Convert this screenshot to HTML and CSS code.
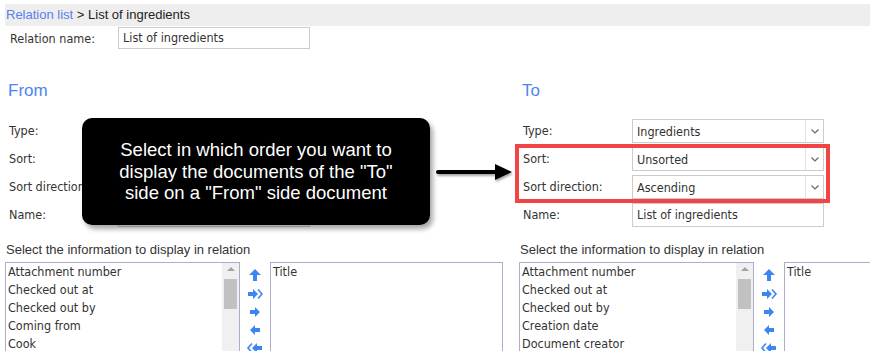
FILE: index.html
```html
<!DOCTYPE html>
<html lang="en">
<head>
  <meta charset="UTF-8" />
  <title>Relation | List of ingredients</title>
  <link rel="stylesheet" href="styles.css">
</head>
<body>
  <!-- Breadcrumb -->
  <div class="crumb"><a href="#">Relation list</a> &gt; List of ingredients</div>

  <div class="name-row">
    <label>Relation name:</label>
    <div class="field">List of ingredients</div>
  </div>

  <div class="sides">
    <!-- From side (its fields sit under the callout) -->
    <section class="side">
      <h2>From</h2>
      <div class="rows">
        <div class="row"><label>Type:</label><div class="select"><span></span><i></i></div></div>
        <div class="row"><label>Sort:</label><div class="select"><span></span><i></i></div></div>
        <div class="row"><label>Sort direction:</label><div class="select"><span></span><i></i></div></div>
        <div class="row"><label>Name:</label><div class="field wide"></div></div>
      </div>
      <div class="pick">
        <p>Select the information to display in relation</p>
        <div class="lists">
          <div class="list avail">
            <ul>
              <li>Attachment number</li>
              <li>Checked out at</li>
              <li>Checked out by</li>
              <li>Coming from</li>
              <li>Cook</li>
            </ul>
            <div class="scroll"><b></b><em></em></div>
          </div>
          <div class="moves">
            <svg viewBox="0 0 18 18"><path d="M9 2 L15 8 L11 8 L11 14 L7 14 L7 8 L3 8 Z" /></svg>
            <svg viewBox="0 0 18 18"><path d="M2 7 L7 7 L7 4 L12 9 L7 14 L7 11 L2 11 Z" /><polyline class="line" points="12,4.5 16,9 12,13.5" /></svg>
            <svg viewBox="0 0 18 18"><path d="M4 7 L9 7 L9 4 L14 9 L9 14 L9 11 L4 11 Z" /></svg>
            <svg viewBox="0 0 18 18"><path d="M14 7 L9 7 L9 4 L4 9 L9 14 L9 11 L14 11 Z" /></svg>
            <svg viewBox="0 0 18 18"><path d="M16 7 L11 7 L11 4 L6 9 L11 14 L11 11 L16 11 Z" /><polyline class="line" points="6,4.5 2,9 6,13.5" /></svg>
          </div>
          <div class="list chosen">
            <ul><li>Title</li></ul>
          </div>
        </div>
      </div>
    </section>

    <!-- To side -->
    <section class="side">
      <h2>To</h2>
      <div class="rows">
        <div class="row"><label>Type:</label><div class="select"><span>Ingredients</span><i></i></div></div>
        <div class="row"><label>Sort:</label><div class="select"><span>Unsorted</span><i></i></div></div>
        <div class="row"><label>Sort direction:</label><div class="select"><span>Ascending</span><i></i></div></div>
        <div class="row"><label>Name:</label><div class="field wide">List of ingredients</div></div>
      </div>
      <div class="pick">
        <p>Select the information to display in relation</p>
        <div class="lists">
          <div class="list avail">
            <ul>
              <li>Attachment number</li>
              <li>Checked out at</li>
              <li>Checked out by</li>
              <li>Creation date</li>
              <li>Document creator</li>
            </ul>
            <div class="scroll"><b></b><em></em></div>
          </div>
          <div class="moves">
            <svg viewBox="0 0 18 18"><path d="M9 2 L15 8 L11 8 L11 14 L7 14 L7 8 L3 8 Z" /></svg>
            <svg viewBox="0 0 18 18"><path d="M2 7 L7 7 L7 4 L12 9 L7 14 L7 11 L2 11 Z" /><polyline class="line" points="12,4.5 16,9 12,13.5" /></svg>
            <svg viewBox="0 0 18 18"><path d="M4 7 L9 7 L9 4 L14 9 L9 14 L9 11 L4 11 Z" /></svg>
            <svg viewBox="0 0 18 18"><path d="M14 7 L9 7 L9 4 L4 9 L9 14 L9 11 L14 11 Z" /></svg>
            <svg viewBox="0 0 18 18"><path d="M16 7 L11 7 L11 4 L6 9 L11 14 L11 11 L16 11 Z" /><polyline class="line" points="6,4.5 2,9 6,13.5" /></svg>
          </div>
          <div class="list chosen">
            <ul><li>Title</li></ul>
          </div>
        </div>
      </div>
    </section>
  </div>

  <!-- Annotation overlay -->
  <div class="callout">Select in which order you want to<br>display the documents of the "To"<br>side on a "From" side document</div>
  <svg class="pointer" viewBox="0 0 84 26">
    <line x1="6" y1="12" x2="66" y2="12" />
    <polygon points="63,4 80,12 63,20" />
  </svg>
  <div class="highlight"></div>
</body>
</html>
```

FILE: styles.css
```css
* {
  margin: 0;
  padding: 0;
  box-sizing: border-box;
}

html,
body {
  overflow: hidden;
}

body {
  font-family: 'DejaVu Sans Condensed', 'Liberation Sans', sans-serif;
  font-size: 12.5px;
  color: #333;
  background: #fff;
  padding: 4px 0 0 5px;
  width: 870px;
  height: 351px;
  position: relative;
}

.crumb {
  font-family: 'Liberation Sans', Arial, sans-serif;
  font-size: 13px;
  background: #eeeeee;
  height: 22px;
  line-height: 22px;
  padding-left: 1px;
  color: #222;
}

.crumb a {
  color: #5b80ee;
  text-decoration: none;
}

.name-row {
  display: flex;
  align-items: center;
  margin-top: 1px;
  padding-left: 5px;
}

.name-row label {
  width: 108px;
}

.field {
  width: 192px;
  height: 22px;
  line-height: 20px;
  border: 1px solid #cccccc;
  padding-left: 4px;
  color: #333;
  background: #fff;
}

.field.wide {
  height: 24px;
  line-height: 22px;
}

.sides {
  display: flex;
}

.side {
  flex: 0 0 514px;
}

.side h2 {
  font-family: 'Liberation Sans', Arial, sans-serif;
  font-weight: normal;
  font-size: 17px;
  line-height: 20px;
  color: #4b86f2;
  margin-top: 32px;
  padding-left: 3px;
}

.rows {
  display: flex;
  flex-direction: column;
  gap: 4px;
  margin-top: 18px;
}

.row {
  display: flex;
  align-items: center;
  padding-left: 4px;
}

.row label {
  width: 109px;
  margin-top: -2px;
}

.select {
  width: 192px;
  height: 24px;
  border: 1px solid #cccccc;
  display: flex;
  align-items: center;
  background: #fff;
}

.select span {
  flex: 1;
  padding-left: 4px;
}

.select i {
  width: 18px;
  height: 100%;
  border-left: 1px solid #e2e2e2;
  background: url("data:image/svg+xml;utf8,<svg xmlns='http://www.w3.org/2000/svg' width='8' height='5'><polyline points='0.5,0.5 4,4 7.5,0.5' fill='none' stroke='%23666' stroke-width='1.2'/></svg>") center no-repeat;
}

.pick {
  margin-top: 15px;
}

.pick p {
  font-family: 'Liberation Sans', Arial, sans-serif;
  font-size: 13px;
  line-height: 16px;
  padding-left: 1px;
  margin-bottom: 4px;
}

.lists {
  display: flex;
}

.list {
  height: 100px;
  border: 1px solid #adadc8;
  background: #fff;
  display: flex;
}

.list ul {
  list-style: none;
  flex: 1;
  padding-left: 2px;
}

.list li {
  line-height: 18px;
}

.avail {
  width: 235px;
}

.chosen {
  width: 233px;
}

.scroll {
  width: 17px;
  background: #f0f0f0;
  display: flex;
  flex-direction: column;
  align-items: center;
  padding-top: 4px;
}

.scroll b {
  width: 0;
  height: 0;
  border-left: 4px solid transparent;
  border-right: 4px solid transparent;
  border-bottom: 4px solid #a3a3a3;
}

.scroll em {
  width: 13px;
  height: 30px;
  background: #c1c1c1;
  margin-top: 8px;
}

.moves {
  width: 30px;
  display: flex;
  flex-direction: column;
  align-items: center;
  padding-top: 5px;
}

.moves svg {
  width: 18px;
  height: 18px;
  fill: #3d86f2;
}

.moves .line {
  fill: none;
  stroke: #3d86f2;
  stroke-width: 1.6;
}

.callout {
  position: absolute;
  left: 82px;
  top: 118px;
  width: 348px;
  height: 107px;
  background: #000;
  border-radius: 10px;
  box-shadow: 3px 4px 5px rgba(0, 0, 0, 0.35);
  color: #fff;
  font-family: 'Liberation Sans', Arial, sans-serif;
  font-size: 18.5px;
  line-height: 21.5px;
  text-align: center;
  display: flex;
  align-items: center;
  justify-content: center;
}

.pointer {
  position: absolute;
  left: 432px;
  top: 160px;
  width: 84px;
  height: 26px;
  filter: drop-shadow(1px 2px 1px rgba(0, 0, 0, 0.35));
}

.pointer line {
  stroke: #000;
  stroke-width: 4;
  stroke-linecap: round;
}

.pointer polygon {
  fill: #000;
}

.highlight {
  position: absolute;
  left: 515px;
  top: 144px;
  width: 315px;
  height: 59px;
  border: 4px solid #f14545;
}
```
